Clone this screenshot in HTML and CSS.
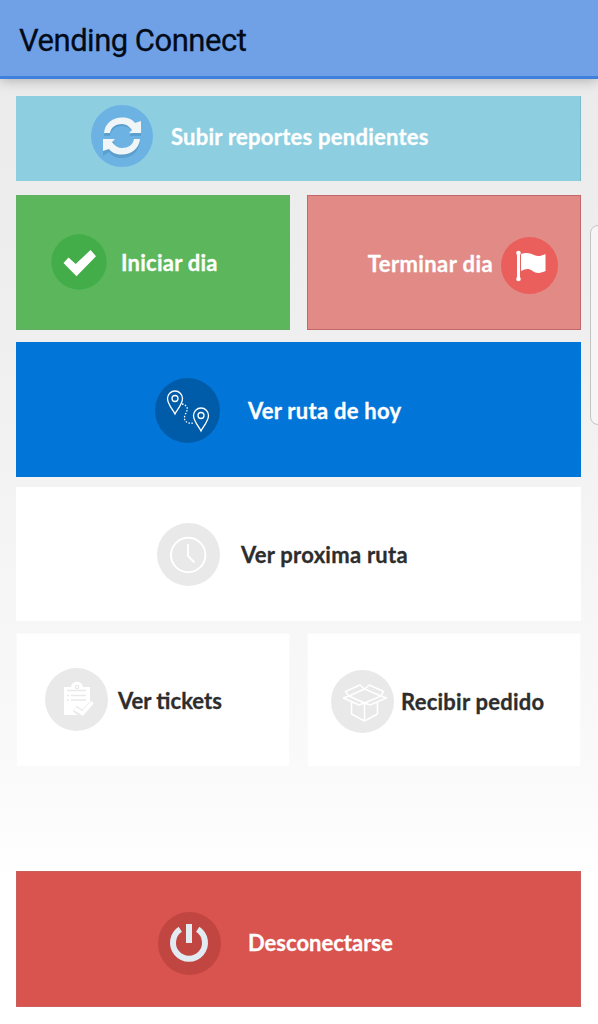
FILE: index.html
```html
<!DOCTYPE html>
<html lang="es">
<head>
<meta charset="utf-8">
<title>Vending Connect</title>
<link rel="stylesheet" href="styles.css">
</head>
<body>
<header class="bar"><h1 class="title">Vending Connect</h1></header>
<main class="menu">
  <button class="tile upload">
    <svg class="icon" width="62" height="62" viewBox="0 0 62 62"><circle cx="31" cy="31" r="31" fill="#6cb3e4"/><g fill="#5a9fce" transform="translate(0 3)"><path d="M13 28C14 18 22 12 31 12c6 0 10 2 13 6l6-3v13H38l4-4c-3-4-7-6-11-6-6 0-11 4-12 10z"/><path d="M49 34c-1 10-9 16-18 16-6 0-10-2-13-6l-6 4V34h12l-4 4c3 4 7 6 11 6 6 0 11-4 12-10z"/></g><g fill="#f0f5f7"><path d="M13 28C14 18 22 12.500 31 12.500c6 0 10 1.500 13 5.500l6-2v12H38l3-3c-3-4-6-6-10-6-6 0-11 3-12 9z"/><path d="M49 34c-1 10-9 15.500-18 15.500-6 0-10-1.500-13-5.500l-6 2V34h12l-3 3c3 4 6 6 10 6 6 0 11-3 12-9z"/></g></svg>
    <span class="label">Subir reportes pendientes</span>
  </button>
  <div class="pair day">
    <button class="tile start">
      <svg class="icon" width="56" height="56" viewBox="0 0 56 56"><circle cx="28" cy="28" r="27.7" fill="#43ad49"/><path d="M12.500 29l5-5.500 7.200 6.500L39.500 16l5.500 6.200-19.500 20z" fill="#fff"/></svg>
      <span class="label">Iniciar dia</span>
    </button>
    <button class="tile finish">
      <span class="label">Terminar dia</span>
      <svg class="icon" width="57" height="57" viewBox="0 0 57 57"><circle cx="28.500" cy="28.500" r="28.500" fill="#ea5f5c"/><g fill="#fff"><rect x="16" y="15" width="3" height="28"/><circle cx="17.500" cy="16" r="2.300"/><circle cx="17.500" cy="42" r="2.300"/><path d="M20 17c5-2 9-1 13 1s7 1 11.500-1v17c-4 2-9 3-13 0s-7-2-11.500 0z"/></g></svg>
    </button>
  </div>
  <button class="tile today">
    <svg class="icon" width="65" height="65" viewBox="0 0 65 65"><circle cx="32.500" cy="32.500" r="32.500" fill="#005ca8"/><g fill="none" stroke="#fff" stroke-width="1.300"><path d="M20 36c-2-4-7.500-10-7.500-15.500a7.500 7.500 0 0 1 15 0C27.500 26 22 32 20 36z"/><circle cx="20" cy="20.500" r="3"/><path d="M46 53c-2-4-7.500-10-7.500-15.500a7.500 7.500 0 0 1 15 0C53.500 43 48 49 46 53z"/><circle cx="46" cy="37.500" r="3"/><path d="M27 26c8 2 5 7 3 11-2 6 2 9 9 8" stroke-dasharray="1.500 1.500"/></g></svg>
    <span class="label">Ver ruta de hoy</span>
  </button>
  <button class="tile light next">
    <svg class="icon" width="63" height="63" viewBox="0 0 63 63"><circle cx="31.500" cy="31.500" r="31.500" fill="#e9e9e9"/><g fill="none" stroke="#fff"><circle cx="31.200" cy="32" r="17.200" stroke-width="2"/><path d="M31 21v12l6.500 6.500" stroke-width="1.900"/></g></svg>
    <span class="label">Ver proxima ruta</span>
  </button>
  <div class="pair orders">
    <button class="tile light tickets">
      <svg class="icon" width="63" height="63" viewBox="0 0 63 63"><circle cx="31.500" cy="31.500" r="31.500" fill="#e9e9e9"/><path d="M19 19h7c1-7 11-7 12 0h7v16L37 43l-5-5-3 3 7 6H19z" fill="#fff"/><g fill="none" stroke="#e9e9e9" stroke-width="1.300"><path d="M22 22.500h19M22 27.500h2m2 0h15M22 32h2m2 0h15"/><circle cx="32" cy="19" r="1.700"/></g><path d="M30 40.500l7.500 6 10.500-11.500" fill="none" stroke="#e9e9e9" stroke-width="7"/><path d="M30 40.500l7.500 5L47.500 34" fill="none" stroke="#fff" stroke-width="3.800"/></svg>
      <span class="label">Ver tickets</span>
    </button>
    <button class="tile light receive">
      <svg class="icon" width="63" height="63" viewBox="0 0 63 63"><circle cx="31.500" cy="31.500" r="31.500" fill="#e9e9e9"/><g fill="none" stroke="#fff" stroke-width="1.600" stroke-linejoin="round"><path d="M18 26L33.500 19 50 26 33.500 33z"/><path d="M33.500 19L29 15 14.500 21.500 18 26M33.500 19l5-4L52.500 21.500 50 26M18 26l-5.500 2L28 35l5.500-2 5.500 2L55.500 28 50 26M20.500 31v13l13 7 13-7V31M33.500 33v18"/></g></svg>
      <span class="label">Recibir pedido</span>
    </button>
  </div>
  <button class="tile logout">
    <svg class="icon" width="63" height="63" viewBox="0 0 63 63"><circle cx="31.500" cy="31.500" r="31.500" fill="#c14541"/><g fill="none" stroke="#e1ebf1" stroke-width="6"><path d="M22.300 17.300A16 16 0 1 0 39.700 17.300"/><path d="M31 12v19"/></g></svg>
    <span class="label">Desconectarse</span>
  </button>
</main>
<aside class="edge-handle"></aside>
</body>
</html>
```
FILE: styles.css
```css
* { box-sizing: border-box; }
body {
  margin: 0;
  height: 1024px;
  overflow: hidden;
  position: relative;
  background: linear-gradient(#ebebeb 80px, #efefef 330px, #f5f5f5 560px, #fafafa 780px, #fff 880px);
}
.bar {
  height: 79px;
  padding: 22px 19px 0;
  background: #70a1e7;
  border-bottom: 3px solid #3f80dd;
  box-shadow: 0 1px 12px rgba(0, 0, 0, .28);
}
.title {
  margin: 0;
  font: 400 31px/38px Roboto, sans-serif;
  letter-spacing: -.5px;
  color: #030b18;
  -webkit-text-stroke: .3px #030b18;
}
.menu {
  display: flex;
  flex-direction: column;
  padding: 17px 17px 0 16px;
}
.pair {
  display: grid;
  grid-template-columns: 274px 274px;
  justify-content: space-between;
}
.tile {
  display: flex;
  align-items: center;
  width: 100%;
  height: 135px;
  padding: 0;
  border: 0;
  font: 700 22px/28px Lato, Carlito, sans-serif;
  letter-spacing: .25px;
  color: #fff;
  text-align: left;
}
.icon { flex: none; display: block; }
.label {
  padding-top: 2px;
  white-space: nowrap;
  -webkit-text-stroke: .3px currentColor;
}
.upload {
  height: 85px;
  padding: 0 0 5px 75px;
  gap: 18px;
  background: #8dcfe1;
  border-right: 1px solid #7bb8c8;
}
.day { margin-top: 14px; }
.start {
  padding: 0 0 1px 34px;
  gap: 14px;
  background: #5cb75c;
  border: 1px solid #62b064;
}
.finish {
  justify-content: flex-end;
  padding: 6px 22px 0 0;
  gap: 8px;
  letter-spacing: .4px;
  background: #e18a86;
  border: 1px solid #c3686a;
}
.finish .label { padding: 0 0 4px; }
.today {
  margin-top: 12px;
  padding: 2px 0 0 139px;
  gap: 28px;
  background: #0275d8;
}
.today .label { padding-top: 0; }
.light { height: 134px; background: #fff; color: #2d2d2d; }
.next { margin-top: 10px; padding-left: 141px; gap: 21px; }
.orders { margin-top: 12px; }
.orders .tile { border: 1px solid #fafafa; }
.tickets { padding: 0 0 2px 28px; gap: 10px; letter-spacing: normal; }
.tickets .label { padding-top: 4px; }
.receive { padding: 3px 0 0 23px; gap: 7px; }
.receive .label { padding-top: 0; }
.logout {
  height: 136px;
  margin-top: 104px;
  padding: 8px 0 0 141px;
  gap: 27px;
  letter-spacing: normal;
  background: #d9534f;
  border: 1px solid #c9605c;
}
.logout .label { padding: 0 0 1px; }
.edge-handle {
  position: absolute;
  left: 590px;
  top: 225px;
  width: 20px;
  height: 200px;
  background: #f5f5f5;
  border: 1px solid #c4c4c4;
  border-radius: 8px;
}
```
